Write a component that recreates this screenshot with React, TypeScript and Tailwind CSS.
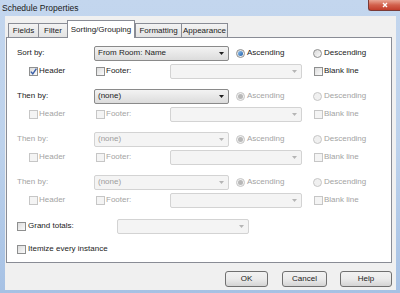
import React from "react";

const font = "font-['Liberation_Sans',Arial,sans-serif]";

function Check({ checked, disabled }: { checked?: boolean; disabled?: boolean }) {
  return (
    <span
      className={`relative inline-block w-[9px] h-[9px] shrink-0 border ${
        disabled ? "border-[#c6c6c6] bg-[#f4f4f4]" : "border-[#8e8f8f] bg-gradient-to-br from-[#dcdcdc] to-[#fbfbfb]"
      }`}
    >
      {checked && (
        <svg viewBox="0 0 9 9" className="absolute -left-px -top-px w-[9px] h-[9px]">
          <path d="M1.8 4.6 L3.8 6.8 L7.4 1.6" fill="none" stroke="#3a5fa8" strokeWidth="1.4" />
        </svg>
      )}
    </span>
  );
}

function Radio({ checked, disabled }: { checked?: boolean; disabled?: boolean }) {
  return (
    <span
      className={`inline-flex items-center justify-center w-[9px] h-[9px] shrink-0 rounded-full border ${
        disabled ? "border-[#c6c6c6] bg-[#f0f0f0]" : "border-[#8e8f8f] bg-gradient-to-br from-[#d8d8d8] to-[#fbfbfb]"
      }`}
    >
      {checked && (
        <span
          className={`w-[5px] h-[5px] rounded-full ${disabled ? "bg-[#b8b8b8]" : "bg-gradient-to-br from-[#8fc3ef] to-[#1f5ea8]"}`}
        />
      )}
    </span>
  );
}

function Arrow({ disabled }: { disabled?: boolean }) {
  return (
    <svg viewBox="0 0 5 3" className="w-[5px] h-[3px]">
      <path d="M0 0 L5 0 L2.5 3 Z" fill={disabled ? "#b5b5b5" : "#1e1e1e"} />
    </svg>
  );
}

function Select({ text, width, disabled }: { text?: string; width: string; disabled?: boolean }) {
  return (
    <div
      className={`${width} h-[15px] flex items-center justify-between pl-[3px] pr-[4px] rounded-[2px] border ${
        disabled
          ? "border-[#d3d3d3] bg-[#f4f4f4] text-[#9c9c9c]"
          : "border-[#8a8a8a] bg-gradient-to-b from-[#f3f3f3] to-[#dcdcdc] text-[#222]"
      }`}
    >
      <span>{text}</span>
      <Arrow disabled={disabled} />
    </div>
  );
}

function SortGroup({
  label,
  active,
  labelActive,
  sortText,
  first,
}: {
  label: string;
  active?: boolean;
  labelActive?: boolean;
  sortText: string;
  first?: boolean;
}) {
  const off = !active;
  const dim = "text-[#a3a3a3]";
  const on = "text-[#222]";
  return (
    <div className="flex flex-col">
      <div className="flex items-center h-[18px]">
        <span className={`w-[77px] ${labelActive ? on : dim}`}>{label}</span>
        <Select text={sortText} width="w-[135px]" disabled={!labelActive} />
        <div className="ml-[7px] w-[77px] flex items-center gap-[2px]">
          <Radio checked disabled={off} />
          <span className={off ? dim : on}>Ascending</span>
        </div>
        <div className="flex items-center gap-[2px]">
          <Radio disabled={off} />
          <span className={off ? dim : on}>Descending</span>
        </div>
      </div>
      <div className="flex items-center h-[18px] pl-[12px]">
        <div className="w-[67px] flex items-center gap-[1px]">
          <Check checked={first} disabled={off} />
          <span className={off ? dim : on}>Header</span>
        </div>
        <div className="w-[74px] flex items-center gap-[1px]">
          <Check disabled={off} />
          <span className={off ? dim : on}>Footer:</span>
        </div>
        <Select width="w-[132px]" disabled />
        <div className="ml-[12px] flex items-center gap-[1px]">
          <Check disabled={off} />
          <span className={off ? dim : on}>Blank line</span>
        </div>
      </div>
    </div>
  );
}

const tabs = [
  { name: "Fields", w: "w-[30px]" },
  { name: "Filter", w: "w-[29px]" },
  { name: "Sorting/Grouping", w: "w-[68px]", selected: true },
  { name: "Formatting", w: "w-[46px]" },
  { name: "Appearance", w: "w-[47px]" },
];

function Button({ label, w }: { label: string; w: string }) {
  return (
    <div
      className={`${w} h-[16px] flex items-center justify-center rounded-[3px] border border-[#707070] bg-gradient-to-b from-[#f2f2f2] via-[#ebebeb] to-[#d4d4d4] text-[#222]`}
    >
      {label}
    </div>
  );
}

export default function App() {
  return (
    <div
      className={`${font} text-[8px] leading-none w-[400px] h-[293px] flex flex-col bg-gradient-to-b from-[#c3d6ee] via-[#bdd2ec] to-[#a6c1e4] overflow-hidden`}
    >
      <div className="h-[16px] flex justify-between items-start">
        <span className="pl-[2px] pt-[4px] text-[8.5px] text-[#1a1a1a]">Schedule Properties</span>
        <div className="w-[32px] h-[11px] rounded-bl-[3px] border border-t-0 border-r-0 border-[#7a3a36] bg-gradient-to-b from-[#e8a595] via-[#d2604c] to-[#c23d2b] flex items-center justify-center">
          <svg viewBox="0 0 6 6" className="w-[6px] h-[6px]">
            <path d="M1 1 L5 5 M5 1 L1 5" stroke="#fff" strokeWidth="1.4" />
          </svg>
        </div>
      </div>

      <div className="ml-[5px] mr-[4px] h-[274px] bg-[#f0f0f0] flex flex-col">
        <div className="h-[21px] flex items-end pl-[3px]">
          {tabs.map((t) =>
            t.selected ? (
              <div
                key={t.name}
                className={`${t.w} h-[18px] -mb-px relative z-10 flex items-center justify-center bg-white border border-b-0 border-[#898c95] text-[#222]`}
              >
                {t.name}
              </div>
            ) : (
              <div
                key={t.name}
                className={`${t.w} h-[14px] flex items-center justify-center bg-gradient-to-b from-[#f3f3f3] to-[#e3e3e3] border border-b-0 border-r-0 last:border-r border-[#898c95] text-[#222]`}
              >
                {t.name}
              </div>
            )
          )}
        </div>

        <div className="ml-[1px] mr-[4px] h-[226px] bg-white border border-[#898c95] pl-[10px] pt-[6px] flex flex-col">
          <div className="flex flex-col gap-[7px]">
            <SortGroup label="Sort by:" active labelActive sortText="From Room: Name" first />
            <SortGroup label="Then by:" labelActive sortText="(none)" />
            <SortGroup label="Then by:" sortText="(none)" />
            <SortGroup label="Then by:" sortText="(none)" />
          </div>
          <div className="mt-[8px] flex items-center h-[18px]">
            <div className="w-[100px] flex items-center gap-[2px]">
              <Check />
              <span className="text-[#222]">Grand totals:</span>
            </div>
            <Select width="w-[132px]" disabled />
          </div>
          <div className="mt-[5px] flex items-center h-[18px] gap-[2px]">
            <Check />
            <span className="text-[#222]">Itemize every instance</span>
          </div>
        </div>

        <div className="flex justify-end items-start pt-[8px] pr-[4px]">
          <Button label="OK" w="w-[43px]" />
          <div className="w-[14px]" />
          <Button label="Cancel" w="w-[45px]" />
          <div className="w-[13px]" />
          <Button label="Help" w="w-[52px]" />
        </div>
      </div>
    </div>
  );
}
